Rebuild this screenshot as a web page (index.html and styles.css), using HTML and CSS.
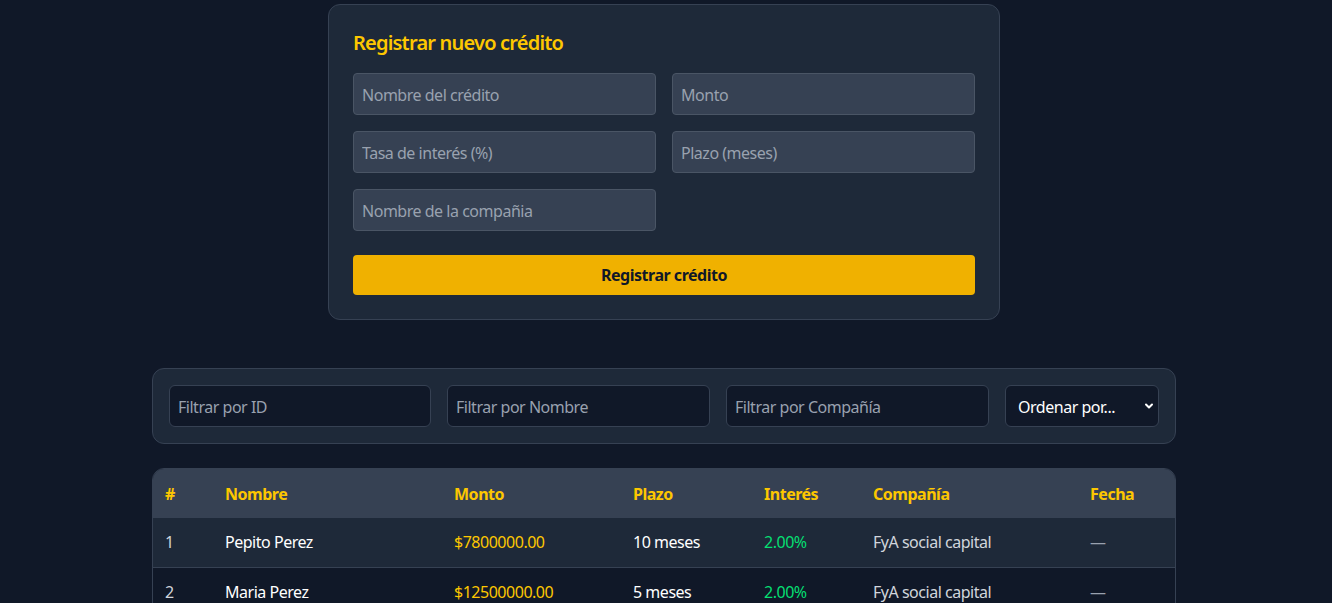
FILE: index.html
```html
<!DOCTYPE html>
<html lang="es">
<head>
<meta charset="utf-8">
<title>Créditos</title>
<link rel="stylesheet" href="styles.css">
</head>
<body>
<main class="page">
  <section class="form-card">
    <h2 class="form-title">Registrar nuevo crédito</h2>
    <div class="form-grid">
      <input class="field" type="text" placeholder="Nombre del crédito">
      <input class="field" type="text" placeholder="Monto">
      <input class="field" type="text" placeholder="Tasa de interés (%)">
      <input class="field" type="text" placeholder="Plazo (meses)">
      <input class="field" type="text" placeholder="Nombre de la compañia">
    </div>
    <button class="submit" type="button">Registrar crédito</button>
  </section>

  <section class="filters">
    <input class="filter" type="text" placeholder="Filtrar por ID">
    <input class="filter" type="text" placeholder="Filtrar por Nombre">
    <input class="filter" type="text" placeholder="Filtrar por Compañía">
    <div class="select-wrap">
      <select class="sort">
        <option>Ordenar por...</option>
      </select>
      <svg class="chev" width="12" height="12" viewBox="0 0 12 12"><path d="M3 4.5 L6 7.5 L9 4.5" fill="none" stroke="#ffffff" stroke-width="2" stroke-linecap="round" stroke-linejoin="round"/></svg>
    </div>
  </section>

  <div class="table-wrap">
    <table class="credits">
      <colgroup>
        <col class="c-id"><col class="c-name"><col class="c-amount"><col class="c-term"><col class="c-rate"><col class="c-company"><col class="c-date">
      </colgroup>
      <thead>
        <tr><th>#</th><th>Nombre</th><th>Monto</th><th>Plazo</th><th>Interés</th><th>Compañía</th><th>Fecha</th></tr>
      </thead>
      <tbody>
        <tr>
          <td class="num">1</td><td class="name">Pepito Perez</td><td class="amount">$7800000.00</td><td class="term">10 meses</td><td class="rate">2.00%</td><td class="company">FyA social capital</td><td class="date">—</td>
        </tr>
        <tr>
          <td class="num">2</td><td class="name">Maria Perez</td><td class="amount">$12500000.00</td><td class="term">5 meses</td><td class="rate">2.00%</td><td class="company">FyA social capital</td><td class="date">—</td>
        </tr>
      </tbody>
    </table>
  </div>
</main>
</body>
</html>
```

FILE: styles.css
```css
* { box-sizing: border-box; }

html, body {
  margin: 0;
  background: #101828;
}

body {
  padding: 4px 4px 0 0;
  font-family: "Noto Sans", "Open Sans", sans-serif;
  letter-spacing: -0.03em;
  color: #ffffff;
  font-size: 16px;
}

.page {
  width: 1024px;
  margin: 0 auto;
  display: flex;
  flex-direction: column;
  align-items: center;
}

.form-card {
  width: 672px;
  background: #1e2939;
  border: 1px solid #364153;
  border-radius: 12px;
  padding: 24px;
}

.form-title {
  margin: 0 0 16px;
  font-size: 20px;
  line-height: 28px;
  font-weight: 600;
  letter-spacing: -0.04em;
  color: #fdc700;
}

.form-grid {
  display: grid;
  grid-template-columns: 1fr 1fr;
  gap: 16px;
}

.field {
  height: 42px;
  background: #364153;
  border: 1px solid #4a5565;
  border-radius: 4px;
  padding: 1px 8px 0;
  font: inherit;
  letter-spacing: inherit;
  font-size: 16px;
  color: #ffffff;
  outline: none;
}

.field::placeholder { color: #99a1af; }

.submit {
  display: block;
  width: 100%;
  height: 40px;
  margin-top: 24px;
  background: #f0b100;
  border: none;
  border-radius: 4px;
  font: inherit;
  letter-spacing: inherit;
  font-weight: 700;
  font-size: 16px;
  color: #101828;
}

.filters {
  width: 1024px;
  margin-top: 48px;
  background: #1e2939;
  border: 1px solid #364153;
  border-radius: 12px;
  padding: 16px;
  display: grid;
  grid-template-columns: 262px 263px 263px 154px;
  gap: 16px;
}

.filter, .sort {
  height: 42px;
  background: #101828;
  border: 1px solid #364153;
  border-radius: 6px;
  padding: 1px 8px 0;
  font: inherit;
  letter-spacing: inherit;
  font-size: 16px;
  color: #ffffff;
  outline: none;
}

.filter::placeholder { color: #99a1af; }

.select-wrap { position: relative; }

.sort {
  width: 100%;
  appearance: none;
  -webkit-appearance: none;
  padding: 2px 12px 0;
}

.chev {
  position: absolute;
  right: 4px;
  top: 15px;
  pointer-events: none;
}

.table-wrap {
  width: 1024px;
  margin-top: 24px;
  border: 1px solid #364153;
  border-radius: 12px 12px 0 0;
  overflow: hidden;
}

.credits {
  width: 100%;
  border-collapse: collapse;
  table-layout: fixed;
}

.c-id { width: 60px; }
.c-name { width: 229px; }
.c-amount { width: 179px; }
.c-term { width: 131px; }
.c-rate { width: 109px; }
.c-company { width: 217px; }
.c-date { width: auto; }

.credits th {
  background: #364153;
  color: #fdc700;
  font-weight: 700;
  text-align: left;
  height: 49px;
  padding: 0 12px;
}

.credits td {
  height: 49px;
  padding: 0 12px;
  border-bottom: 1px solid #364153;
}

.credits tbody tr:nth-child(odd) td { background: #1e2939; }
.credits tbody tr:nth-child(even) td { background: #101828; }

.num { color: #d1d5dc; }
.name { color: #ffffff; }
.amount { color: #fdc700; }
.term { color: #ffffff; }
.rate { color: #05df72; }
.company { color: #d1d5dc; }
.date { color: #99a1af; }
```
